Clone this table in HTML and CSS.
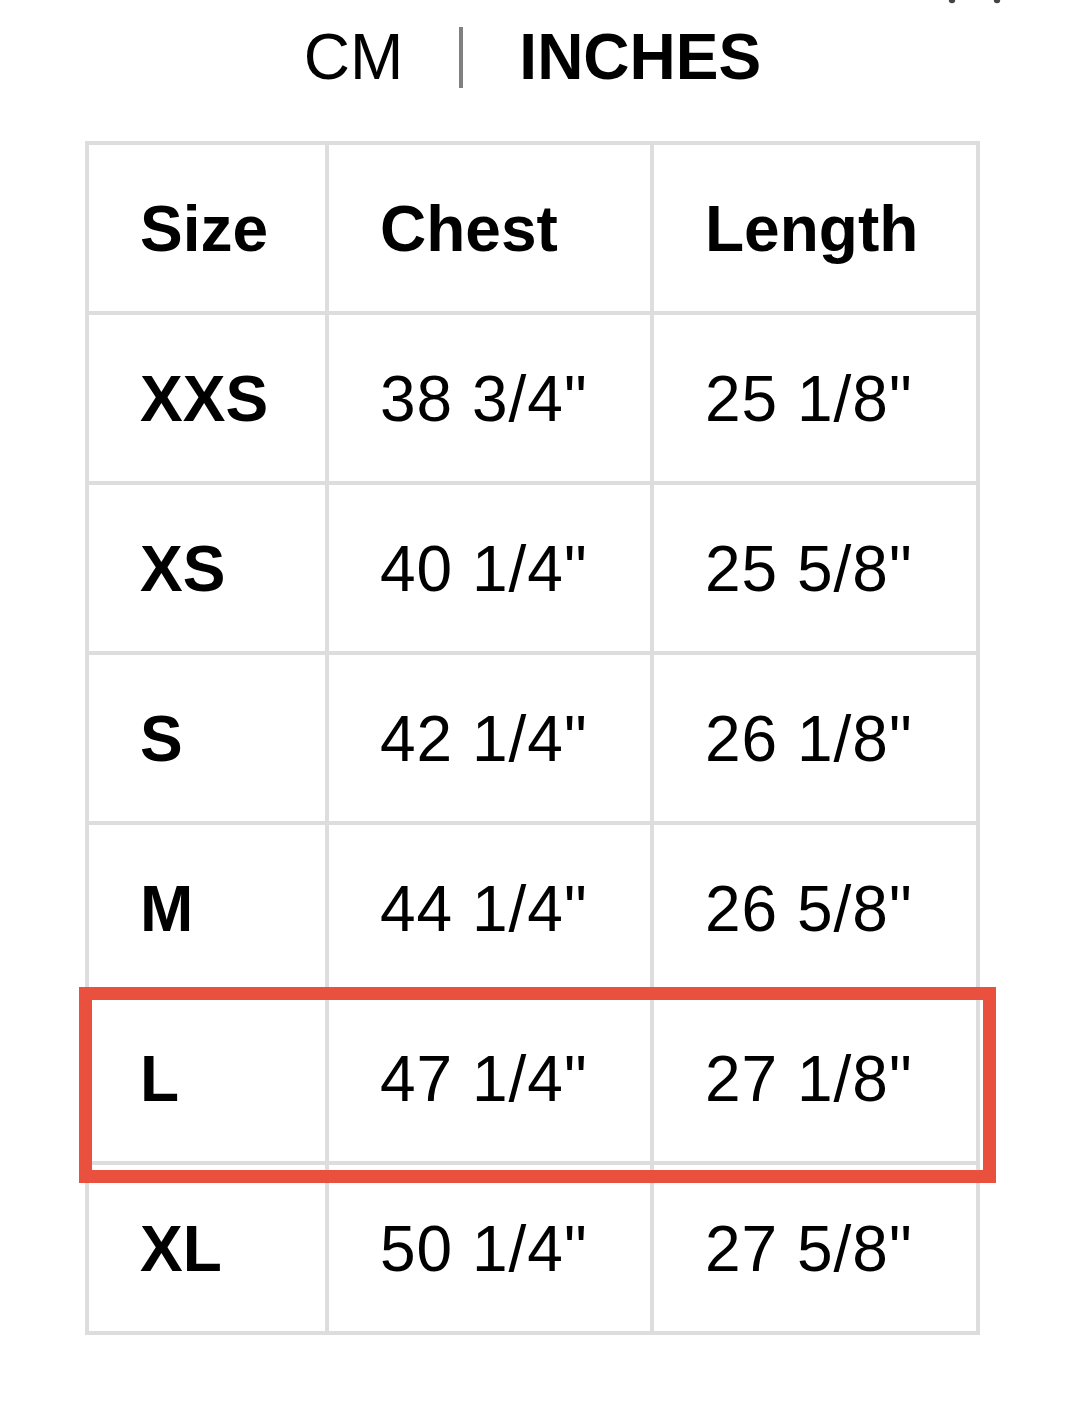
FILE: index.html
```html
<!DOCTYPE html>
<html>
<head>
<meta charset="utf-8">
<link rel="stylesheet" href="styles.css">
</head>
<body>
<div class="page">
  <svg class="corner-icon" width="60" height="8" viewBox="0 0 60 8"><circle cx="6" cy="0" r="3.2" fill="#444"/><circle cx="51" cy="0" r="3.2" fill="#444"/></svg>
  <div class="units">
    <span class="unit">CM</span>
    <span class="bar"></span>
    <span class="unit active">INCHES</span>
  </div>
  <div class="chart">
    <div class="grid">
      <div class="cell head">Size</div><div class="cell head">Chest</div><div class="cell head">Length</div>
      <div class="cell head">XXS</div><div class="cell">38 3/4"</div><div class="cell">25 1/8"</div>
      <div class="cell head">XS</div><div class="cell">40 1/4"</div><div class="cell">25 5/8"</div>
      <div class="cell head">S</div><div class="cell">42 1/4"</div><div class="cell">26 1/8"</div>
      <div class="cell head">M</div><div class="cell">44 1/4"</div><div class="cell">26 5/8"</div>
      <div class="cell head">L</div><div class="cell">47 1/4"</div><div class="cell">27 1/8"</div>
      <div class="cell head">XL</div><div class="cell">50 1/4"</div><div class="cell">27 5/8"</div>
    </div>
    <div class="highlight"></div>
  </div>
</div>
</body>
</html>
```

FILE: styles.css
```css
* { box-sizing: border-box; }
html, body { margin: 0; padding: 0; background: #fff; }
body {
  font-family: "Liberation Sans", Arial, Helvetica, sans-serif;
  color: #000;
  width: 1080px;
  height: 1418px;
  overflow: hidden;
}
.page {
  position: relative;
  padding-left: 85px;
  padding-top: 25px;
}
.corner-icon {
  position: absolute;
  top: 0;
  left: 946px;
}
.units {
  width: 895px;
  display: flex;
  justify-content: center;
  align-items: center;
  gap: 56px;
  font-size: 64px;
  line-height: 64px;
  height: 64px;
}
.unit { font-weight: 400; }
.unit.active { font-weight: 700; }
.bar {
  width: 4px;
  height: 61px;
  background: #808080;
  margin-top: 0;
}
.chart {
  position: relative;
  margin-top: 52px;
  width: 895px;
}
.grid {
  display: grid;
  grid-template-columns: 236px 321px 322px;
  grid-auto-rows: 166px;
  gap: 4px;
  padding: 4px;
  background: #dddddd;
}
.cell {
  background: #fff;
  display: flex;
  align-items: center;
  padding-left: 51px;
  font-size: 64px;
  font-weight: 400;
  letter-spacing: 1px;
  padding-top: 1px;
}
.cell.head { font-weight: 700; letter-spacing: 0; }
.highlight {
  position: absolute;
  left: -6px;
  top: 846px;
  width: 917px;
  height: 196px;
  border: 13px solid #e9503d;
}
```
